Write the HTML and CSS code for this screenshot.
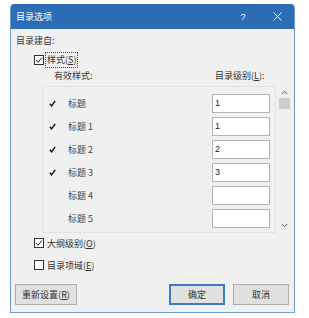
FILE: index.html
```html
<!DOCTYPE html>
<html lang="zh">
<head>
<meta charset="utf-8">
<link rel="stylesheet" href="styles.css">
</head>
<body>
<div class="dialog">
  <div class="titlebar">
    <span class="title">目录选项</span>
    <span class="help">?</span>
    <span class="close"><svg width="9" height="9" viewBox="0 0 9 9"><path d="M0.5 0.5 L8.5 8.5 M8.5 0.5 L0.5 8.5" stroke="#fff" stroke-width="1"/></svg></span>
  </div>
  <div class="body">
    <div class="heading">目录建自:</div>
    <div class="opt first">
      <span class="cb"><svg width="10" height="10" viewBox="0 0 10 10"><path d="M2 5 L4 7.3 L8 2.5" fill="none" stroke="#222" stroke-width="1"/></svg></span>
      <span class="focus">样式(<u>S</u>)</span>
    </div>
    <div class="cols">
      <span class="col-a">有效样式:</span>
      <span class="col-b">目录级别(<u>L</u>):</span>
    </div>
    <div class="listwrap">
      <div class="list">
        <div class="row"><span class="tick"><svg width="7" height="7" viewBox="0 0 7 7"><path d="M0.8 3.8 L2.6 5.8 L6.2 0.8" fill="none" stroke="#111" stroke-width="1.4"/></svg></span><span class="name">标题</span><span class="lvl">1</span></div>
        <div class="row"><span class="tick"><svg width="7" height="7" viewBox="0 0 7 7"><path d="M0.8 3.8 L2.6 5.8 L6.2 0.8" fill="none" stroke="#111" stroke-width="1.4"/></svg></span><span class="name">标题 1</span><span class="lvl">1</span></div>
        <div class="row"><span class="tick"><svg width="7" height="7" viewBox="0 0 7 7"><path d="M0.8 3.8 L2.6 5.8 L6.2 0.8" fill="none" stroke="#111" stroke-width="1.4"/></svg></span><span class="name">标题 2</span><span class="lvl">2</span></div>
        <div class="row"><span class="tick"><svg width="7" height="7" viewBox="0 0 7 7"><path d="M0.8 3.8 L2.6 5.8 L6.2 0.8" fill="none" stroke="#111" stroke-width="1.4"/></svg></span><span class="name">标题 3</span><span class="lvl">3</span></div>
        <div class="row"><span class="tick"></span><span class="name">标题 4</span><span class="lvl"></span></div>
        <div class="row"><span class="tick"></span><span class="name">标题 5</span><span class="lvl"></span></div>
      </div>
      <div class="scroll">
        <svg class="arrow" width="7" height="5" viewBox="0 0 7 5"><path d="M0.8 4 L3.5 1.2 L6.2 4" fill="none" stroke="#555" stroke-width="1"/></svg>
        <div class="thumb"></div>
        <div class="track"></div>
        <svg class="arrow" width="7" height="5" viewBox="0 0 7 5"><path d="M0.8 1 L3.5 3.8 L6.2 1" fill="none" stroke="#555" stroke-width="1"/></svg>
      </div>
    </div>
    <div class="opt outline">
      <span class="cb"><svg width="10" height="10" viewBox="0 0 10 10"><path d="M2 5 L4 7.3 L8 2.5" fill="none" stroke="#222" stroke-width="1"/></svg></span>
      <span>大纲级别(<u>O</u>)</span>
    </div>
    <div class="opt fields">
      <span class="cb"></span>
      <span>目录项域(<u>E</u>)</span>
    </div>
    <div class="buttons">
      <button class="btn reset">重新设置(<u>R</u>)</button>
      <span class="spacer"></span>
      <button class="btn ok">确定</button>
      <button class="btn cancel">取消</button>
    </div>
  </div>
</div>
</body>
</html>
```

FILE: styles.css
```css
html, body {
  margin: 0;
  padding: 0;
  background: #ffffff;
}
body {
  font-family: "Noto Sans CJK SC", "Noto Sans", sans-serif;
  font-size: 9px;
  color: #333333;
}
.dialog {
  margin: 4px 0 0 10px;
  width: 285px;
  height: 309px;
  box-sizing: border-box;
  border: 1px solid #6f9bd3;
  border-top: none;
  border-radius: 4px 4px 0 0;
  background: #f0f0f0;
  display: flex;
  flex-direction: column;
  overflow: hidden;
}
.titlebar {
  height: 25px;
  flex: none;
  background: #2d6db5;
  color: #ffffff;
  display: flex;
  align-items: center;
  padding-left: 6px;
  margin: 0 -1px;
}
.title {
  flex: 1;
  font-size: 9px;
}
.help {
  width: 20px;
  text-align: center;
  font-family: "Liberation Sans", sans-serif;
  font-size: 9px;
  margin-right: 20px;
}
.close {
  width: 9px;
  display: flex;
  align-items: center;
  margin-right: 13px;
}
.body {
  display: flex;
  flex-direction: column;
  padding-left: 5px;
}
.heading {
  height: 12px;
  line-height: 12px;
  margin-top: 6px;
}
.opt {
  display: flex;
  align-items: center;
  height: 14px;
  padding-left: 18px;
}
.opt.first {
  margin-top: 6px;
}
.opt.outline {
  margin-top: 3px;
}
.opt.fields {
  margin-top: 8px;
}
.cb {
  width: 10px;
  height: 10px;
  box-sizing: border-box;
  border: 1px solid #333;
  background: #fff;
  margin-right: 3px;
  display: flex;
  align-items: center;
  justify-content: center;
}
.cb svg {
  flex: none;
}
.focus {
  outline: 1px dotted #444;
  outline-offset: 0;
  padding: 1px 1px;
  line-height: 12px;
  margin-left: -1px;
}
u {
  text-decoration: underline;
  text-underline-offset: 1px;
}
.cols {
  display: flex;
  height: 12px;
  line-height: 12px;
  margin-top: 3px;
}
.col-a {
  padding-left: 38px;
  width: 161px;
}
.listwrap {
  display: flex;
  margin-top: 4px;
  margin-left: 26px;
}
.list {
  width: 234px;
  height: 147px;
  box-sizing: border-box;
  border: 1px solid #e2e2e2;
  padding: 7px 0 0 0;
  display: flex;
  flex-direction: column;
  gap: 4px;
}
.row {
  display: flex;
  align-items: center;
  height: 19px;
}
.tick {
  width: 7px;
  height: 7px;
  margin-left: 6px;
  display: flex;
}
.name {
  margin-left: 12px;
  width: 144px;
  color: #444;
}
.lvl {
  width: 58px;
  height: 19px;
  box-sizing: border-box;
  border: 1px solid #b4b4b4;
  background: #fff;
  line-height: 17px;
  padding-left: 2px;
  font-family: "Liberation Sans", sans-serif;
  color: #222;
}
.scroll {
  width: 12px;
  margin-left: 2px;
  display: flex;
  flex-direction: column;
  align-items: center;
  padding-top: 4px;
}
.arrow {
  flex: none;
}
.thumb {
  width: 11px;
  height: 11px;
  margin-top: 3px;
  background: #cdcdcd;
}
.track {
  flex: 1;
}
.scroll .arrow:last-child {
  margin-bottom: 5px;
}
.buttons {
  display: flex;
  margin-top: 12px;
  padding-right: 5px;
}
.btn {
  height: 21px;
  box-sizing: border-box;
  border: 1px solid #adadad;
  background: #e1e1e1;
  font-family: "Noto Sans CJK SC", "Noto Sans", sans-serif;
  font-size: 9px;
  color: #333;
  padding: 0;
}
.reset {
  width: 62px;
  margin-left: -1px;
}
.spacer {
  flex: 1;
}
.ok {
  width: 56px;
  border: 2px solid #3c7dc4;
  margin-right: 8px;
}
.cancel {
  width: 56px;
}
```
